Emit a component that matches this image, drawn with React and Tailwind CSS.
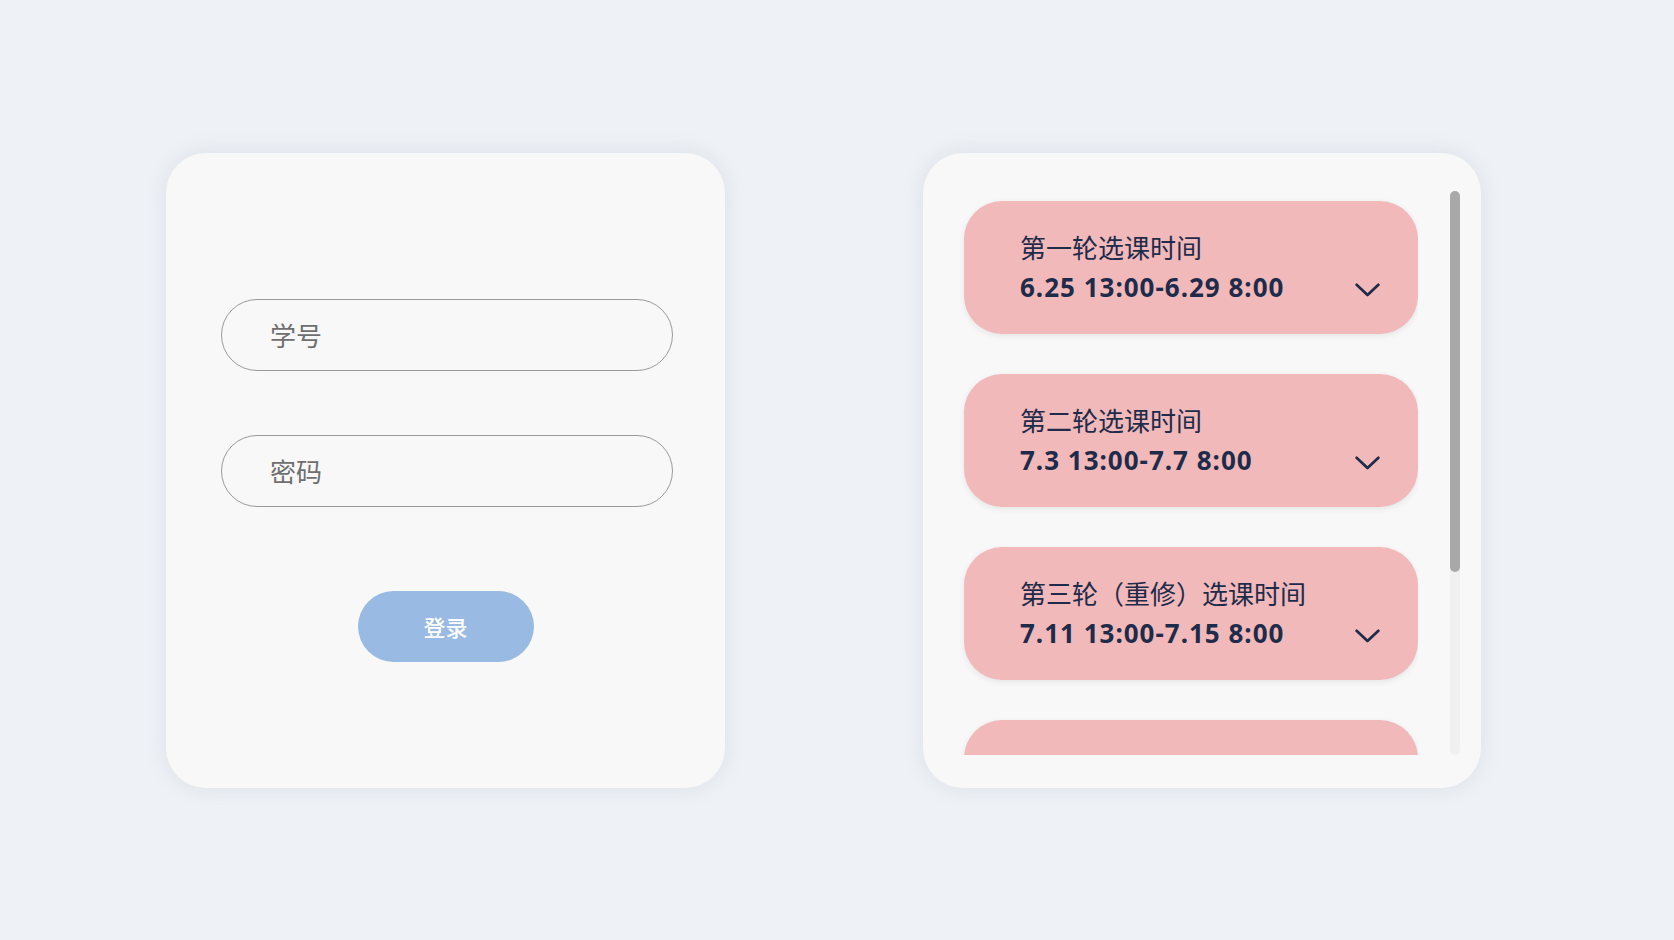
import React from "react";

const items = [
  { title: "第一轮选课时间", time: "6.25 13:00-6.29 8:00" },
  { title: "第二轮选课时间", time: "7.3 13:00-7.7 8:00" },
  { title: "第三轮（重修）选课时间", time: "7.11 13:00-7.15 8:00" },
  { title: "", time: "" },
];

function Chevron() {
  return (
    <svg width="25" height="14" viewBox="0 0 25 14" fill="none" className="shrink-0 mt-[5px]">
      <path d="M1.6 1.8 L12.5 12 L23.4 1.8" stroke="#1f2b4a" strokeWidth="2.7" strokeLinecap="round" strokeLinejoin="round" />
    </svg>
  );
}

export default function App() {
  return (
    <div className="min-h-[940px] w-full bg-[#eef2f6] font-['Noto_Sans','Noto_Sans_CJK_SC',sans-serif]">
      <div className="flex items-start gap-[198px] pl-[166px] pt-[153px]">
        {/* Login card */}
        <div className="w-[559px] h-[635px] rounded-[40px] bg-[#f8f8f8] shadow-[0_0_20px_rgba(150,160,185,0.22)] flex flex-col items-center pt-[146px]">
          <input
            placeholder="学号"
            className="w-[452px] h-[72px] rounded-full border border-[#9a9a9a] bg-transparent pl-[48px] pb-[2px] text-[26px] text-[#333] placeholder:text-[#6f6f6f] outline-none font-['Noto_Sans_CJK_SC',sans-serif] ml-[3px]"
          />
          <input
            placeholder="密码"
            type="text"
            className="mt-[64px] w-[452px] h-[72px] rounded-full border border-[#9a9a9a] bg-transparent pl-[48px] pb-[2px] text-[26px] text-[#333] placeholder:text-[#6f6f6f] outline-none font-['Noto_Sans_CJK_SC',sans-serif] ml-[3px]"
          />
          <button className="mt-[84px] w-[176px] h-[71px] rounded-full bg-[#98bae3] text-white text-[22px] font-medium font-['Noto_Sans_CJK_SC',sans-serif]">
            登录
          </button>
        </div>

        {/* Schedule card */}
        <div className="w-[558px] h-[635px] rounded-[40px] bg-[#f8f8f8] shadow-[0_0_20px_rgba(150,160,185,0.22)] flex pl-[35px] pr-[21px] pt-[38px] gap-[32px]">
          <div className="w-[466px] h-[564px] overflow-hidden flex flex-col gap-[40px] pt-[10px] pl-[6px]">
            {items.map((it, i) => (
              <div
                key={i}
                className="w-[454px] h-[133px] shrink-0 rounded-[38px] bg-[#f1b9b9] shadow-[0_2px_6px_rgba(0,0,0,0.08)] flex flex-col justify-center pl-[56px] pr-[38px] pb-[1px] text-[#1f2b4a]"
              >
                {it.title && (
                  <>
                    <div className="text-[26px] leading-[40px] font-normal font-['Noto_Sans_CJK_SC',sans-serif]">{it.title}</div>
                    <div className="flex items-center justify-between h-[40px]">
                      <span className="text-[26px] leading-[40px] font-bold tracking-[1px]">{it.time}</span>
                      <Chevron />
                    </div>
                  </>
                )}
              </div>
            ))}
          </div>
          <div className="w-[10px] h-[564px] rounded-full bg-[#f0f0f0] shrink-0">
            <div className="h-[381px] w-full rounded-full bg-[#a9a9a9]" />
          </div>
        </div>
      </div>
    </div>
  );
}
